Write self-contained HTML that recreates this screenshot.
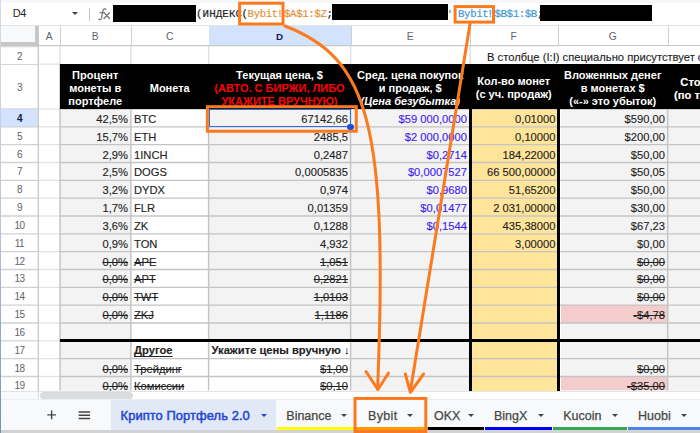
<!DOCTYPE html><html><head><meta charset="utf-8"><style>
*{margin:0;padding:0;box-sizing:border-box}
html,body{width:700px;height:433px;overflow:hidden;background:#fff;font-family:"Liberation Sans", sans-serif;}
.a{position:absolute}
.t{position:absolute;font-size:11.2px;line-height:12px;color:#222;white-space:nowrap;-webkit-text-stroke:0.12px currentColor}
.r{text-align:right}
.s{text-decoration:line-through;text-decoration-skip-ink:none}
.hd{position:absolute;color:#fff;font-weight:bold;font-size:11px;line-height:13px;text-align:center;display:flex;align-items:center;justify-content:center;white-space:nowrap}
.ch{position:absolute;top:26px;height:19.5px;padding-top:1.2px;font-size:10.3px;color:#5f6368;display:flex;align-items:center;justify-content:center}
.rh{position:absolute;left:1px;width:37px;padding-top:1px;font-size:10px;letter-spacing:-0.45px;color:#5f6368;display:flex;align-items:center;justify-content:center}
</style></head><body><div class="a" style="left:0;top:0;width:700px;height:2.8px;background:#f6f8fc"></div>
<div class="a" style="left:0;top:25px;width:700px;height:1px;background:#e3e3e3"></div>
<div class="a" style="left:12.8px;top:6.3px;font-size:11px;letter-spacing:-0.4px;line-height:14px;color:#1f1f1f">D4</div>
<div class="a" style="left:72px;top:12px;width:0;height:0;border-left:3.5px solid transparent;border-right:3.5px solid transparent;border-top:3.5px solid #444"></div>
<div class="a" style="left:88.5px;top:8px;width:1px;height:13px;background:#c7c7c7"></div>
<svg class="a" style="left:90px;top:4px" width="24" height="20" viewBox="90 4 24 20"><g fill="none" stroke="#7a7a7a" stroke-width="1.25" stroke-linecap="round"><path d="M105.8,9.4 C105.2,8.5 103.9,8.5 103.3,9.6 C102.7,10.8 102.3,14 101.6,17.6 C101.2,19.6 99.9,20 98.7,19.2"/><path d="M100,12.7 H104"/><path d="M104,12.6 L109.5,18.5 M109.5,12.6 L104,18.5" stroke-width="1.35"/></g></svg>
<div class="a" style="left:113px;top:5px;width:83px;height:17px;background:#000"></div>
<div class="a" style="left:196px;top:8px;font-family:'Liberation Mono',monospace;font-size:10.8px;letter-spacing:-0.41px;line-height:13px;white-space:nowrap;-webkit-text-stroke:0.2px currentColor;letter-spacing:0.1px"><span style="color:#1f1f1f">(ИНДЕКС</span></div>
<div class="a" style="left:241.5px;top:8px;font-family:'Liberation Mono',monospace;font-size:10.8px;letter-spacing:-0.41px;line-height:13px;white-space:nowrap;-webkit-text-stroke:0.2px currentColor"><span style="color:#1f1f1f">(</span><span style="color:#e8913a">Bybit<span style="position:relative;left:-1.3px">!</span>$A$1:$Z</span><span style="color:#1f1f1f">;</span></div>
<div class="a" style="left:331.5px;top:4px;width:116.5px;height:16px;background:#000"></div>
<div class="a" style="left:458px;top:8px;font-family:'Liberation Mono',monospace;font-size:10.8px;letter-spacing:-0.41px;line-height:13px;white-space:nowrap;-webkit-text-stroke:0.2px currentColor"><span style="color:#3f9ad6">Bybit<span style="position:relative;left:-1.3px">!</span>$B$1:$B</span><span style="color:#1f1f1f">;</span></div>
<div class="a" style="left:449.3px;top:9.8px;width:1.5px;height:3px;background:#7fb9dd"></div>
<div class="a" style="left:540px;top:5px;width:111.5px;height:16px;background:#000"></div>
<div class="a" style="left:1px;top:26px;width:34px;height:16px;background:#f8f9fa"></div>
<div class="a" style="left:35px;top:26px;width:4px;height:20px;background:#c7c7c7"></div>
<div class="a" style="left:1px;top:42px;width:38px;height:4px;background:#c7c7c7"></div>
<div class="ch" style="left:39px;width:20.5px">A</div>
<div class="a" style="left:59.5px;top:26px;width:1px;height:19px;background:#d0d0d0"></div>
<div class="ch" style="left:60px;width:70.5px">B</div>
<div class="a" style="left:130.5px;top:26px;width:1px;height:19px;background:#d0d0d0"></div>
<div class="ch" style="left:131px;width:77.5px">C</div>
<div class="a" style="left:208.5px;top:26px;width:1px;height:19px;background:#d0d0d0"></div>
<div class="a" style="left:208.5px;top:26px;width:142.0px;height:19px;background:#d3e3fd"></div>
<div class="ch" style="left:208.5px;width:142.0px;color:#0b1f4a;font-weight:bold;font-size:9.8px">D</div>
<div class="a" style="left:350.5px;top:26px;width:1px;height:19px;background:#d0d0d0"></div>
<div class="ch" style="left:351px;width:118.5px">E</div>
<div class="a" style="left:469.5px;top:26px;width:1px;height:19px;background:#d0d0d0"></div>
<div class="ch" style="left:469.5px;width:88.5px">F</div>
<div class="a" style="left:558px;top:26px;width:1px;height:19px;background:#d0d0d0"></div>
<div class="ch" style="left:558px;width:109.5px">G</div>
<div class="a" style="left:667.5px;top:26px;width:1px;height:19px;background:#d0d0d0"></div>
<div class="ch" style="left:667.5px;width:152.5px">H</div>
<div class="a" style="left:820px;top:26px;width:1px;height:19px;background:#d0d0d0"></div>
<svg class="a" style="left:0;top:0" width="700" height="60" viewBox="0 0 700 60"><path d="M39,45.6 H700" stroke="#c8c8c8" stroke-width="1.3"/><path d="M1,46.6 H38" stroke="#d6d6d6" stroke-width="1.4"/></svg>
<div class="rh" style="top:47px;height:17px">2</div>
<div class="a" style="left:1px;top:64px;width:37px;height:1px;background:#d6d6d6"></div>
<div class="rh" style="top:64px;height:45.0px">3</div>
<svg class="a" style="left:0;top:0" width="40" height="433" viewBox="0 0 40 433"><path d="M1,109.00 H38" stroke="#d2d2d2" stroke-width="1.3"/></svg>
<div class="rh" style="top:109.0px;height:17.833px;background:#d3e3fd;color:#0b1f4a;font-weight:bold">4</div>
<svg class="a" style="left:0;top:0" width="40" height="433" viewBox="0 0 40 433"><path d="M1,126.83 H38" stroke="#d2d2d2" stroke-width="1.3"/></svg>
<div class="rh" style="top:126.833px;height:17.833px">5</div>
<svg class="a" style="left:0;top:0" width="40" height="433" viewBox="0 0 40 433"><path d="M1,144.67 H38" stroke="#d2d2d2" stroke-width="1.3"/></svg>
<div class="rh" style="top:144.666px;height:17.833px">6</div>
<svg class="a" style="left:0;top:0" width="40" height="433" viewBox="0 0 40 433"><path d="M1,162.50 H38" stroke="#d2d2d2" stroke-width="1.3"/></svg>
<div class="rh" style="top:162.499px;height:17.833px">7</div>
<svg class="a" style="left:0;top:0" width="40" height="433" viewBox="0 0 40 433"><path d="M1,180.33 H38" stroke="#d2d2d2" stroke-width="1.3"/></svg>
<div class="rh" style="top:180.332px;height:17.833px">8</div>
<svg class="a" style="left:0;top:0" width="40" height="433" viewBox="0 0 40 433"><path d="M1,198.16 H38" stroke="#d2d2d2" stroke-width="1.3"/></svg>
<div class="rh" style="top:198.165px;height:17.833px">9</div>
<svg class="a" style="left:0;top:0" width="40" height="433" viewBox="0 0 40 433"><path d="M1,216.00 H38" stroke="#d2d2d2" stroke-width="1.3"/></svg>
<div class="rh" style="top:215.998px;height:17.833px">10</div>
<svg class="a" style="left:0;top:0" width="40" height="433" viewBox="0 0 40 433"><path d="M1,233.83 H38" stroke="#d2d2d2" stroke-width="1.3"/></svg>
<div class="rh" style="top:233.831px;height:17.833px">11</div>
<svg class="a" style="left:0;top:0" width="40" height="433" viewBox="0 0 40 433"><path d="M1,251.66 H38" stroke="#d2d2d2" stroke-width="1.3"/></svg>
<div class="rh" style="top:251.664px;height:17.83299999999997px">12</div>
<svg class="a" style="left:0;top:0" width="40" height="433" viewBox="0 0 40 433"><path d="M1,269.50 H38" stroke="#d2d2d2" stroke-width="1.3"/></svg>
<div class="rh" style="top:269.49699999999996px;height:17.833000000000027px">13</div>
<svg class="a" style="left:0;top:0" width="40" height="433" viewBox="0 0 40 433"><path d="M1,287.33 H38" stroke="#d2d2d2" stroke-width="1.3"/></svg>
<div class="rh" style="top:287.33px;height:17.833000000000027px">14</div>
<svg class="a" style="left:0;top:0" width="40" height="433" viewBox="0 0 40 433"><path d="M1,305.16 H38" stroke="#d2d2d2" stroke-width="1.3"/></svg>
<div class="rh" style="top:305.163px;height:17.83299999999997px">15</div>
<svg class="a" style="left:0;top:0" width="40" height="433" viewBox="0 0 40 433"><path d="M1,323.00 H38" stroke="#d2d2d2" stroke-width="1.3"/></svg>
<div class="rh" style="top:322.996px;height:17.83299999999997px">16</div>
<svg class="a" style="left:0;top:0" width="40" height="433" viewBox="0 0 40 433"><path d="M1,340.83 H38" stroke="#d2d2d2" stroke-width="1.3"/></svg>
<div class="rh" style="top:340.82899999999995px;height:17.833000000000027px">17</div>
<svg class="a" style="left:0;top:0" width="40" height="433" viewBox="0 0 40 433"><path d="M1,358.66 H38" stroke="#d2d2d2" stroke-width="1.3"/></svg>
<div class="rh" style="top:358.662px;height:17.833000000000027px">18</div>
<svg class="a" style="left:0;top:0" width="40" height="433" viewBox="0 0 40 433"><path d="M1,376.50 H38" stroke="#d2d2d2" stroke-width="1.3"/></svg>
<div class="rh" style="top:376.495px;height:17.83299999999997px">19</div>
<svg class="a" style="left:0;top:0" width="40" height="433" viewBox="0 0 40 433"><path d="M38.3,46 V399" stroke="#c8c8c8" stroke-width="1.3"/></svg>
<div class="a" style="left:60px;top:109.0px;width:70.5px;height:281.5px;background:#f3f3f3"></div>
<div class="a" style="left:208.5px;top:109.0px;width:142.0px;height:231.82899999999995px;background:#f3f3f3"></div>
<div class="a" style="left:351px;top:109.0px;width:118.5px;height:281.5px;background:#f3f3f3"></div>
<div class="a" style="left:469.5px;top:109.0px;width:88.5px;height:281.5px;background:#ffe599"></div>
<div class="a" style="left:558px;top:109px;width:2.5px;height:281.5px;background:#fff"></div>
<div class="a" style="left:560.5px;top:109.0px;width:107.0px;height:281.5px;background:#f3f3f3"></div>
<div class="a" style="left:667.5px;top:109.0px;width:152.5px;height:281.5px;background:#f3f3f3"></div>
<div class="a" style="left:560.5px;top:305.163px;width:107.0px;height:17.83299999999997px;background:#f4cccc"></div>
<div class="a" style="left:560.5px;top:376.495px;width:107.0px;height:14.004999999999995px;background:#f4cccc"></div>
<svg class="a" style="left:0;top:0" width="700" height="433" viewBox="0 0 700 433"><path d="M60,109.00 H700" stroke="#c4c4c4" stroke-width="1.4"/><path d="M39,109.00 H60" stroke="#e3e3e3" stroke-width="1.3"/><path d="M60,126.83 H700" stroke="#c4c4c4" stroke-width="1.4"/><path d="M39,126.83 H60" stroke="#e3e3e3" stroke-width="1.3"/><path d="M60,144.67 H700" stroke="#c4c4c4" stroke-width="1.4"/><path d="M39,144.67 H60" stroke="#e3e3e3" stroke-width="1.3"/><path d="M60,162.50 H700" stroke="#c4c4c4" stroke-width="1.4"/><path d="M39,162.50 H60" stroke="#e3e3e3" stroke-width="1.3"/><path d="M60,180.33 H700" stroke="#c4c4c4" stroke-width="1.4"/><path d="M39,180.33 H60" stroke="#e3e3e3" stroke-width="1.3"/><path d="M60,198.16 H700" stroke="#c4c4c4" stroke-width="1.4"/><path d="M39,198.16 H60" stroke="#e3e3e3" stroke-width="1.3"/><path d="M60,216.00 H700" stroke="#c4c4c4" stroke-width="1.4"/><path d="M39,216.00 H60" stroke="#e3e3e3" stroke-width="1.3"/><path d="M60,233.83 H700" stroke="#c4c4c4" stroke-width="1.4"/><path d="M39,233.83 H60" stroke="#e3e3e3" stroke-width="1.3"/><path d="M60,251.66 H700" stroke="#c4c4c4" stroke-width="1.4"/><path d="M39,251.66 H60" stroke="#e3e3e3" stroke-width="1.3"/><path d="M60,269.50 H700" stroke="#c4c4c4" stroke-width="1.4"/><path d="M39,269.50 H60" stroke="#e3e3e3" stroke-width="1.3"/><path d="M60,287.33 H700" stroke="#c4c4c4" stroke-width="1.4"/><path d="M39,287.33 H60" stroke="#e3e3e3" stroke-width="1.3"/><path d="M60,305.16 H700" stroke="#c4c4c4" stroke-width="1.4"/><path d="M39,305.16 H60" stroke="#e3e3e3" stroke-width="1.3"/><path d="M60,323.00 H700" stroke="#c4c4c4" stroke-width="1.4"/><path d="M39,323.00 H60" stroke="#e3e3e3" stroke-width="1.3"/><path d="M60,340.83 H700" stroke="#c4c4c4" stroke-width="1.4"/><path d="M39,340.83 H60" stroke="#e3e3e3" stroke-width="1.3"/><path d="M60,358.66 H700" stroke="#c4c4c4" stroke-width="1.4"/><path d="M39,358.66 H60" stroke="#e3e3e3" stroke-width="1.3"/><path d="M60,376.50 H700" stroke="#c4c4c4" stroke-width="1.4"/><path d="M39,376.50 H60" stroke="#e3e3e3" stroke-width="1.3"/><path d="M39,64.2 H60" stroke="#e3e3e3" stroke-width="1.3"/><path d="M60.0,46 V64" stroke="#dedede" stroke-width="1.3"/><path d="M60.0,64 V390.5" stroke="#c4c4c4" stroke-width="1.45"/><path d="M130.9,46 V64" stroke="#dedede" stroke-width="1.3"/><path d="M130.9,64 V390.5" stroke="#c4c4c4" stroke-width="1.45"/><path d="M208.6,46 V64" stroke="#dedede" stroke-width="1.3"/><path d="M208.6,64 V390.5" stroke="#c4c4c4" stroke-width="1.45"/><path d="M350.6,46 V64" stroke="#dedede" stroke-width="1.3"/><path d="M350.6,64 V390.5" stroke="#c4c4c4" stroke-width="1.45"/><path d="M667.7,46 V64" stroke="#dedede" stroke-width="1.3"/><path d="M667.7,64 V390.5" stroke="#c4c4c4" stroke-width="1.45"/><path d="M470,46 V64" stroke="#dedede" stroke-width="1.3"/></svg>
<div class="a" style="left:559px;top:46px;width:141px;height:18px;background:#fff"></div>
<div class="a" style="left:60px;top:64px;width:640px;height:45px;background:#000"></div>
<div class="a" style="left:469px;top:64px;width:3px;height:326.5px;background:#000"></div>
<div class="a" style="left:557px;top:64px;width:3px;height:326.5px;background:#000"></div>
<div class="a" style="left:60px;top:339.3px;width:640px;height:2.7px;background:#000"></div>
<div class="hd" style="left:60px;top:65.7px;width:70.5px;height:45px;"><div>Процент<br>монеты в<br>портфеле</div></div>
<div class="hd" style="left:131px;top:65.7px;width:77.5px;height:45px;"><div>Монета</div></div>
<div class="hd" style="left:208.5px;top:65.7px;width:142.0px;height:45px;"><div>Текущая цена, $<br><span style="color:#ff0000">(АВТО. С БИРЖИ, ЛИБО<br>УКАЖИТЕ ВРУЧНУЮ)</span></div></div>
<div class="hd" style="left:351px;top:65.7px;width:118.5px;height:45px;"><div>Сред. цена покупок<br>и продаж, $<br><i>(Цена безубытка)</i></div></div>
<div class="hd" style="left:469.5px;top:65.7px;width:88.5px;height:45px;"><div>Кол-во монет<br>(с уч. продаж)</div></div>
<div class="hd" style="left:558px;top:65.7px;width:109.5px;height:45px;"><div>Вложенных денег<br>в монетах $<br>(«-» это убыток)</div></div>
<div class="t" style="left:680.3px;top:75.5px;color:#fff;font-weight:bold">Стоимость</div>
<div class="t" style="left:674px;top:88.5px;color:#fff;font-weight:bold">(по текущей</div>
<div class="t" style="left:487px;top:50.6px">В столбце (I:I) специально присутствует с</div>
<div class="t r " style="right:572.0px;top:112.83px;">42,5%</div>
<div class="t " style="left:134px;top:112.83px;">BTC</div>
<div class="t r " style="right:352.0px;top:112.83px;">67142,66</div>
<div class="t r " style="right:233.0px;top:112.83px;color:#4020f0">$59 000,0000</div>
<div class="t r " style="right:144.5px;top:112.83px;">0,01000</div>
<div class="t r " style="right:35.0px;top:112.83px;">$590,00</div>
<div class="t r " style="right:572.0px;top:130.67px;">15,7%</div>
<div class="t " style="left:134px;top:130.67px;">ETH</div>
<div class="t r " style="right:352.0px;top:130.67px;">2485,5</div>
<div class="t r " style="right:233.0px;top:130.67px;color:#4020f0">$2 000,0000</div>
<div class="t r " style="right:144.5px;top:130.67px;">0,10000</div>
<div class="t r " style="right:35.0px;top:130.67px;">$200,00</div>
<div class="t r " style="right:572.0px;top:148.50px;">2,9%</div>
<div class="t " style="left:134px;top:148.50px;">1INCH</div>
<div class="t r " style="right:352.0px;top:148.50px;">0,2487</div>
<div class="t r " style="right:233.0px;top:148.50px;color:#4020f0">$0,2714</div>
<div class="t r " style="right:144.5px;top:148.50px;">184,22000</div>
<div class="t r " style="right:35.0px;top:148.50px;">$50,00</div>
<div class="t r " style="right:572.0px;top:166.33px;">2,5%</div>
<div class="t " style="left:134px;top:166.33px;">DOGS</div>
<div class="t r " style="right:352.0px;top:166.33px;">0,0005835</div>
<div class="t r " style="right:233.0px;top:166.33px;color:#4020f0">$0,0007527</div>
<div class="t r " style="right:144.5px;top:166.33px;">66 500,00000</div>
<div class="t r " style="right:35.0px;top:166.33px;">$50,05</div>
<div class="t r " style="right:572.0px;top:184.16px;">3,2%</div>
<div class="t " style="left:134px;top:184.16px;">DYDX</div>
<div class="t r " style="right:352.0px;top:184.16px;">0,974</div>
<div class="t r " style="right:233.0px;top:184.16px;color:#4020f0">$0,9680</div>
<div class="t r " style="right:144.5px;top:184.16px;">51,65200</div>
<div class="t r " style="right:35.0px;top:184.16px;">$50,00</div>
<div class="t r " style="right:572.0px;top:202.00px;">1,7%</div>
<div class="t " style="left:134px;top:202.00px;">FLR</div>
<div class="t r " style="right:352.0px;top:202.00px;">0,01359</div>
<div class="t r " style="right:233.0px;top:202.00px;color:#4020f0">$0,01477</div>
<div class="t r " style="right:144.5px;top:202.00px;">2 031,00000</div>
<div class="t r " style="right:35.0px;top:202.00px;">$30,00</div>
<div class="t r " style="right:572.0px;top:219.83px;">3,6%</div>
<div class="t " style="left:134px;top:219.83px;">ZK</div>
<div class="t r " style="right:352.0px;top:219.83px;">0,1288</div>
<div class="t r " style="right:233.0px;top:219.83px;color:#4020f0">$0,1544</div>
<div class="t r " style="right:144.5px;top:219.83px;">435,38000</div>
<div class="t r " style="right:35.0px;top:219.83px;">$67,23</div>
<div class="t r " style="right:572.0px;top:237.66px;">0,9%</div>
<div class="t " style="left:134px;top:237.66px;">TON</div>
<div class="t r " style="right:352.0px;top:237.66px;">4,932</div>
<div class="t r " style="right:144.5px;top:237.66px;">3,00000</div>
<div class="t r " style="right:35.0px;top:237.66px;">$0,00</div>
<div class="t r s" style="right:572.0px;top:255.50px;">0,0%</div>
<div class="t s" style="left:134px;top:255.50px;">APE</div>
<div class="t r s" style="right:352.0px;top:255.50px;">1,051</div>
<div class="t r s" style="right:35.0px;top:255.50px;">$0,00</div>
<div class="t r s" style="right:572.0px;top:273.33px;">0,0%</div>
<div class="t s" style="left:134px;top:273.33px;">APT</div>
<div class="t r s" style="right:352.0px;top:273.33px;">0,2821</div>
<div class="t r s" style="right:35.0px;top:273.33px;">$0,00</div>
<div class="t r s" style="right:572.0px;top:291.16px;">0,0%</div>
<div class="t s" style="left:134px;top:291.16px;">TWT</div>
<div class="t r s" style="right:352.0px;top:291.16px;">1,0103</div>
<div class="t r s" style="right:35.0px;top:291.16px;">$0,00</div>
<div class="t r s" style="right:572.0px;top:309.00px;">0,0%</div>
<div class="t s" style="left:134px;top:309.00px;">ZKJ</div>
<div class="t r s" style="right:352.0px;top:309.00px;">1,1186</div>
<div class="t r s" style="right:35.0px;top:309.00px;">-$4,78</div>
<div class="t r s" style="right:572.0px;top:362.50px;">0,0%</div>
<div class="t s" style="left:134px;top:362.50px;">Трейдинг</div>
<div class="t r s" style="right:352.0px;top:362.50px;">$1,00</div>
<div class="t r s" style="right:35.0px;top:362.50px;">$0,00</div>
<div class="t r s" style="right:572.0px;top:380.33px;">0,0%</div>
<div class="t s" style="left:134px;top:380.33px;">Комиссии</div>
<div class="t r s" style="right:352.0px;top:380.33px;">$0,10</div>
<div class="t r s" style="right:35.0px;top:380.33px;">-$35,00</div>
<div class="t " style="left:134px;top:344.66px;font-weight:bold;text-decoration:underline;text-decoration-skip-ink:none;text-underline-offset:1.5px;margin-top:-1px">Другое</div>
<div class="t " style="left:211.5px;top:344.66px;font-weight:bold;margin-top:-1px">Укажите цены вручную ↓</div>
<div class="a" style="left:0;top:390.5px;width:700px;height:43px;background:#f8f9fa"></div>
<div class="a" style="left:1px;top:390.5px;width:699px;height:1px;background:#e3e3e3"></div>
<div class="a" style="left:1px;top:391.5px;width:37px;height:7.5px;background:#f8f9fa"></div>
<div class="a" style="left:38px;top:391.5px;width:1px;height:7.5px;background:#d9d9d9"></div>
<div class="a" style="left:39px;top:391.5px;width:661px;height:7.5px;background:#fff"></div>
<div class="a" style="left:40px;top:391.5px;width:93px;height:7px;border-radius:4px;background:#dadce0"></div>
<div class="a" style="left:0;top:399px;width:700px;height:31px;background:#f8f9fa;border-top:1px solid #eceef1"></div>
<div class="a" style="left:0;top:430px;width:700px;height:3px;background:#d3d3d3"></div>
<div class="a" style="left:0;top:0;width:1.2px;height:433px;background:linear-gradient(#d5dbe3,#b8c7de 50%,#6e92c4)"></div>
<svg class="a" style="left:0;top:400px" width="110" height="30" viewBox="0 400 110 30"><g stroke="#444" stroke-width="1.4" fill="none"><path d="M47.3,414.9 H55.9 M51.6,410.6 V419.2"/><path d="M78.6,411.9 H90.1 M78.6,415.2 H90.1 M78.6,418.4 H90.1" stroke-width="1.5"/></g></svg>
<div class="a" style="left:111px;top:400px;width:165px;height:30px;background:#e1e9f7"></div>
<div class="a" style="left:120.6px;top:409.8px;font-size:12.9px;line-height:12px;color:#2347d2;-webkit-text-stroke:0.5px #2347d2;letter-spacing:0.08px;white-space:nowrap">Крипто Портфель 2.0</div>
<div class="a" style="left:261px;top:414.3px;width:0;height:0;border-left:3.2px solid transparent;border-right:3.2px solid transparent;border-top:3.5px solid #2347d2"></div>
<div class="a" style="left:286.3px;top:410px;letter-spacing:0;font-size:12.5px;line-height:12px;color:#444746;white-space:nowrap;-webkit-text-stroke:0.25px #444746">Binance</div>
<div class="a" style="left:341px;top:414px;width:0;height:0;border-left:3.2px solid transparent;border-right:3.2px solid transparent;border-top:3.5px solid #444"></div>
<div class="a" style="left:277px;top:427px;width:77px;height:3px;background:#ffff00"></div>
<div class="a" style="left:368px;top:410px;letter-spacing:0.35px;font-size:12.5px;line-height:12px;color:#444746;white-space:nowrap;-webkit-text-stroke:0.25px #444746">Bybit</div>
<div class="a" style="left:407px;top:414px;width:0;height:0;border-left:3.2px solid transparent;border-right:3.2px solid transparent;border-top:3.5px solid #444"></div>
<div class="a" style="left:354px;top:427px;width:74px;height:3px;background:#ff9900"></div>
<div class="a" style="left:434px;top:410px;letter-spacing:0;font-size:12.5px;line-height:12px;color:#444746;white-space:nowrap;-webkit-text-stroke:0.25px #444746">OKX</div>
<div class="a" style="left:468px;top:414px;width:0;height:0;border-left:3.2px solid transparent;border-right:3.2px solid transparent;border-top:3.5px solid #444"></div>
<div class="a" style="left:428px;top:427px;width:56px;height:3px;background:#000000"></div>
<div class="a" style="left:494px;top:410px;letter-spacing:0;font-size:12.5px;line-height:12px;color:#444746;white-space:nowrap;-webkit-text-stroke:0.25px #444746">BingX</div>
<div class="a" style="left:538px;top:414px;width:0;height:0;border-left:3.2px solid transparent;border-right:3.2px solid transparent;border-top:3.5px solid #444"></div>
<div class="a" style="left:485px;top:427px;width:67px;height:3px;background:#0000ff"></div>
<div class="a" style="left:563.2px;top:410px;letter-spacing:0;font-size:12.5px;line-height:12px;color:#444746;white-space:nowrap;-webkit-text-stroke:0.25px #444746">Kucoin</div>
<div class="a" style="left:612px;top:414px;width:0;height:0;border-left:3.2px solid transparent;border-right:3.2px solid transparent;border-top:3.5px solid #444"></div>
<div class="a" style="left:553px;top:427px;width:74px;height:3px;background:#34a853"></div>
<div class="a" style="left:638px;top:410px;letter-spacing:0;font-size:12.5px;line-height:12px;color:#444746;white-space:nowrap;-webkit-text-stroke:0.25px #444746">Huobi</div>
<div class="a" style="left:680.8px;top:414px;width:0;height:0;border-left:3.2px solid transparent;border-right:3.2px solid transparent;border-top:3.5px solid #444"></div>
<div class="a" style="left:628px;top:427px;width:72px;height:3px;background:#4a86e8"></div>
<svg class="a" style="left:0;top:0" width="700" height="433" viewBox="0 0 700 433">
<g fill="none" stroke="#fc7a1e" stroke-width="3" stroke-linecap="round" stroke-linejoin="round">
<rect x="239.6" y="3.2" width="43.4" height="20.8" stroke-linejoin="miter"/>
<rect x="455.1" y="6.6" width="38.4" height="15.5" stroke-linejoin="miter"/>
<rect x="207.35" y="106.7" width="148.9" height="24.55" stroke-linejoin="miter"/>
<rect x="355" y="398.45" width="70.8" height="33.1" stroke-linejoin="miter"/>
<path d="M285,26 C368.6,58.1 388.2,124.9 377.6,389"/>
<path d="M366,371.5 L377.9,389.5 L388.5,373"/>
<path d="M470,24 L410.4,391"/>
<path d="M405.3,374 L410.4,392.3 L423.6,374"/>
</g></svg>
<div class="a" style="left:209px;top:109px;width:141.6px;height:18.3px;border:1.6px solid #2f6fe4"></div>
<div class="a" style="left:347.4px;top:123.8px;width:6.6px;height:6.6px;border-radius:50%;background:#1d4fd6"></div></body></html>
